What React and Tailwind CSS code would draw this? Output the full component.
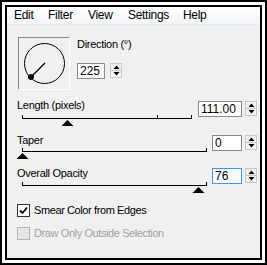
import React from "react";

const font = { fontFamily: '"Liberation Sans", Arial, sans-serif' };

function Spinner() {
  return (
    <div className="flex h-[15px] w-[12px] flex-col border border-[#c7c7c7] bg-[#f3f3f3]">
      <div className="flex flex-1 items-center justify-center border-b border-[#c7c7c7]">
        <svg width="7" height="4" viewBox="0 0 7 4">
          <path d="M0.5 4 L3.5 0.5 L6.5 4 Z" fill="#000" />
        </svg>
      </div>
      <div className="flex flex-1 items-center justify-center">
        <svg width="7" height="4" viewBox="0 0 7 4">
          <path d="M0.5 0 L3.5 3.5 L6.5 0 Z" fill="#000" />
        </svg>
      </div>
    </div>
  );
}

function NumBox({ value, w, focused }) {
  return (
    <div
      className={
        "flex h-[16px] items-center bg-white pl-[2px] text-[12px] leading-none text-black " +
        (focused ? "border border-[#3399ff]" : "border border-[#8a8a8a]")
      }
      style={{ width: w }}
    >
      {value}
    </div>
  );
}

function Slider({ width, ticks, thumb }) {
  return (
    <div className="relative h-[11px]" style={{ width }}>
      <div className="absolute left-0 right-0 top-[3px] h-px bg-black" />
      {ticks.map((t) => (
        <div key={t} className="absolute top-0 h-[4px] w-px bg-black" style={{ left: t }} />
      ))}
      <svg
        className="absolute top-[5px]"
        style={{ left: thumb - 6 }}
        width="13"
        height="6"
        viewBox="0 0 13 6"
      >
        <path d="M0.5 6 L6.5 0 L12.5 6 Z" fill="#000" />
      </svg>
    </div>
  );
}

export default function App() {
  return (
    <div
      className="h-[265px] w-[267px] border-2 border-black bg-white p-[3px] text-[11px] leading-[13px] text-black"
      style={font}
    >
      <div className="flex h-full w-full flex-col border-2 border-black bg-[#f0f0f0]">
        {/* menu bar */}
        <div className="flex h-[18px] items-center border-b border-[#e6e8ec] bg-gradient-to-b from-[#ffffff] to-[#f1f4f9] pl-[7px] text-[12px] tracking-[-0.3px]">
          <span className="w-[34px]">Edit</span>
          <span className="w-[40px]">Filter</span>
          <span className="w-[40px]">View</span>
          <span className="w-[55px]">Settings</span>
          <span>Help</span>
        </div>

        {/* direction row */}
        <div className="ml-[11px] mt-[12px] flex">
          <div className="h-[53px] w-[52px] border border-b-white border-l-[#8a8a8a] border-r-white border-t-[#8a8a8a] bg-[#f0f0f0]">
            <svg width="50" height="51" viewBox="0 0 50 51">
              <circle cx="25.5" cy="25.5" r="20" fill="none" stroke="#000" strokeWidth="1" />
              <line x1="12" y1="39" x2="26" y2="25" stroke="#000" strokeWidth="1.2" />
              <circle cx="12" cy="39" r="3" fill="#000" />
            </svg>
          </div>
          <div className="ml-[7px] flex flex-col">
            <div className="mt-[1px] h-[13px] tracking-[-0.3px]">Direction (°)</div>
            <div className="mt-[12px] flex items-start gap-[5px]">
              <NumBox value="225" w={28} />
              <Spinner />
            </div>
          </div>
        </div>

        {/* length row */}
        <div className="mt-[9px] flex items-start">
          <div className="ml-[10px] flex flex-col">
            <div className="h-[13px] tracking-[-0.3px]">Length (pixels)</div>
            <div className="ml-[5px] mt-[3px]">
              <Slider width={170} ticks={[0, 135, 169]} thumb={45} />
            </div>
          </div>
          <div className="ml-auto mr-[3px] mt-[2px] flex items-start gap-[3px]">
            <NumBox value="111.00" w={44} />
            <Spinner />
          </div>
        </div>

        {/* taper row */}
        <div className="mt-[8px] flex items-start">
          <div className="ml-[10px] flex flex-col">
            <div className="h-[13px] tracking-[-0.3px]">Taper</div>
            <div className="ml-[5px] mt-[1px]">
              <Slider width={185} ticks={[0, 184]} thumb={0} />
            </div>
          </div>
          <div className="ml-auto mr-[3px] mt-[1px] flex items-start gap-[3px]">
            <NumBox value="0" w={30} />
            <Spinner />
          </div>
        </div>

        {/* opacity row */}
        <div className="mt-[8px] flex items-start">
          <div className="ml-[10px] flex flex-col">
            <div className="h-[13px] tracking-[-0.3px]">Overall Opacity</div>
            <div className="ml-[5px] mt-[2px]">
              <Slider width={185} ticks={[0, 184]} thumb={176} />
            </div>
          </div>
          <div className="ml-auto mr-[3px] mt-[1px] flex items-start gap-[3px]">
            <NumBox value="76" w={30} focused />
            <Spinner />
          </div>
        </div>

        {/* checkboxes */}
        <div className="ml-[10px] mt-[11px] flex items-center gap-[4px]">
          <div className="flex h-[13px] w-[13px] items-center justify-center border border-[#333] bg-white">
            <svg width="9" height="9" viewBox="0 0 9 9">
              <path d="M1 4.5 L3.5 7 L8 1.5" fill="none" stroke="#000" strokeWidth="1.8" />
            </svg>
          </div>
          <span className="tracking-[-0.4px]">Smear Color from Edges</span>
        </div>
        <div className="ml-[10px] mt-[10px] flex items-center gap-[4px]">
          <div className="h-[13px] w-[13px] border border-[#b5b5b5] bg-[#e6e6e6]" />
          <span className="tracking-[-0.4px] text-[#a0a0a0]">Draw Only Outside Selection</span>
        </div>
      </div>
    </div>
  );
}
